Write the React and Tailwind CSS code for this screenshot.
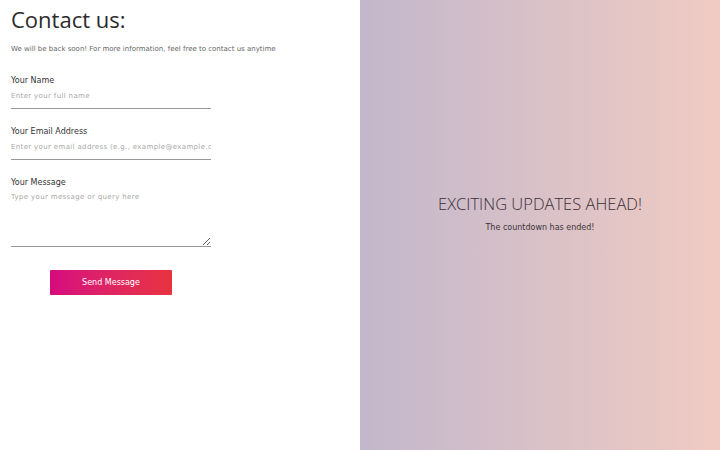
import { useState } from 'react';

const Field = ({ label, placeholder, multiline }) => (
  <div className="flex flex-col">
    <label className="text-[8px] leading-[12px] text-[#333] font-['DejaVu_Sans',sans-serif]">{label}</label>
    {multiline ? (
      <textarea
        placeholder={placeholder}
        className="w-[200px] h-[58px] pt-[3px] border-0 border-b border-[#999] bg-transparent text-[7px] tracking-[0.05em] text-[#555] placeholder:text-[#a8a8a8] outline-none resize-y font-['DejaVu_Sans',sans-serif]"
      />
    ) : (
      <input
        type="text"
        placeholder={placeholder}
        className="w-[200px] h-[22px] pb-[3px] border-0 border-b border-[#999] bg-transparent text-[7px] tracking-[0.05em] text-[#555] placeholder:text-[#a8a8a8] outline-none font-['DejaVu_Sans',sans-serif]"
      />
    )}
  </div>
);

export default function App() {
  const [sent, setSent] = useState(false);

  return (
    <div className="flex w-[720px] h-[450px]">
      <div className="w-[360px] h-full bg-white px-[11px] pt-[4px]">
        <h1 className="text-[22px] leading-[30px] text-[#2b2b2b] font-['Open_Sans',sans-serif]">Contact us:</h1>
        <p className="mt-[10px] text-[7px] leading-[10px] text-[#666] font-['DejaVu_Sans',sans-serif]">
          We will be back soon! For more information, feel free to contact us anytime
        </p>

        <form
          className="mt-[21px] flex flex-col gap-[17px]"
          onSubmit={(e) => {
            e.preventDefault();
            setSent(true);
          }}
        >
          <Field label="Your Name" placeholder="Enter your full name" />
          <Field label="Your Email Address" placeholder="Enter your email address (e.g., example@example.com)" />
          <Field label="Your Message" placeholder="Type your message or query here" multiline />

          <div className="w-[200px] flex justify-center pt-[6px]">
            <button
              type="submit"
              className="w-[122px] h-[25px] bg-gradient-to-r from-[#d6087e] to-[#e8323e] text-white text-[8px] rounded-[1px] font-['DejaVu_Sans',sans-serif]"
            >
              {sent ? 'Message Sent' : 'Send Message'}
            </button>
          </div>
        </form>
      </div>

      <div className="w-[360px] h-full flex flex-col items-center justify-center bg-gradient-to-r from-[#c2b7cb] to-[#f0cbc3]">
        <h2 className="-mt-[24px] text-[16.5px] leading-[22px] font-light text-[#3a3039] font-['Open_Sans',sans-serif]">
          EXCITING UPDATES AHEAD!
        </h2>
        <p className="mt-[7px] text-[8px] leading-[12px] text-[#3b3438] font-['DejaVu_Sans',sans-serif]">
          The countdown has ended!
        </p>
      </div>
    </div>
  );
}
